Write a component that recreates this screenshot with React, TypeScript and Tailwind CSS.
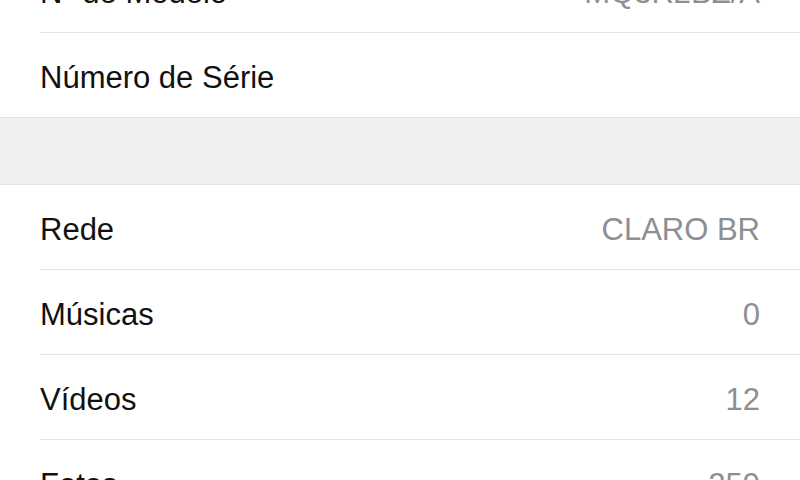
import React from "react";

type Row = { label: string; value?: string };

function Cell({ label, value }: Row) {
  return (
    <div className="h-[84px] flex items-center justify-between pl-10 pr-10 pt-[5px]">
      <span className="text-[31px] text-[#111111] leading-none">{label}</span>
      {value !== undefined && (
        <span className="text-[31px] text-[#8e8e93] leading-none">{value}</span>
      )}
    </div>
  );
}

function Sep() {
  return <div className="h-px bg-[#e3e3e5] ml-10" />;
}

export default function App() {
  return (
    <div
      className="w-[800px] h-[480px] overflow-hidden bg-white"
      style={{ fontFamily: '"Liberation Sans", Arial, sans-serif' }}
    >
      <div className="-mt-[52px]">
        <div className="bg-white">
          <Cell label="Nº de Modelo" value="MQ3R2BZ/A" />
          <Sep />
          <Cell label="Número de Série" />
        </div>
        <div className="h-[68px] bg-[#efeff2] border-t border-b border-[#e2e2e5]" />
        <div className="bg-white">
          <Cell label="Rede" value="CLARO BR" />
          <Sep />
          <Cell label="Músicas" value="0" />
          <Sep />
          <Cell label="Vídeos" value="12" />
          <Sep />
          <Cell label="Fotos" value="259" />
        </div>
      </div>
    </div>
  );
}
